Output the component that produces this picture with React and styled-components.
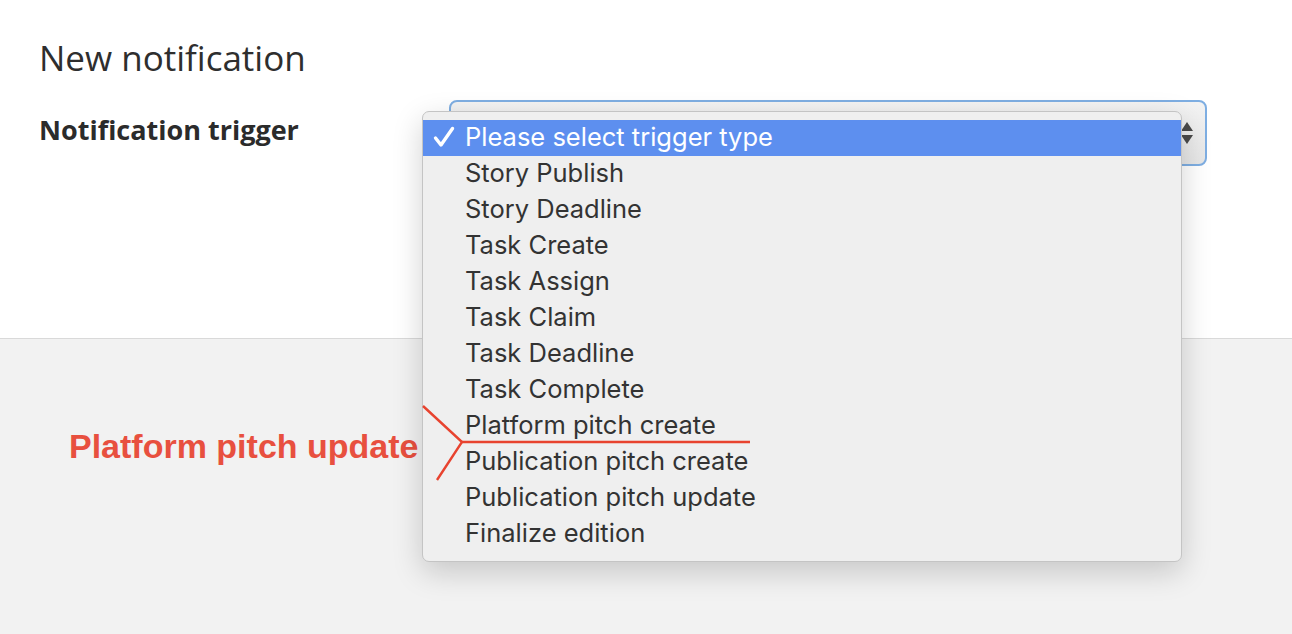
import React from "react";
import styled, { createGlobalStyle } from "styled-components";

const GlobalStyle = createGlobalStyle`
  html, body {
    margin: 0;
    padding: 0;
    background: #f2f2f2;
  }
  body {
    font-family: "Open Sans", Roboto, sans-serif;
    color: #2b2b2b;
  }
`;

const triggers = [
  "Please select trigger type",
  "Story Publish",
  "Story Deadline",
  "Task Create",
  "Task Assign",
  "Task Claim",
  "Task Deadline",
  "Task Complete",
  "Platform pitch create",
  "Publication pitch create",
  "Publication pitch update",
  "Finalize edition",
];

const CheckIcon = () => (
  <svg width="24" height="24" viewBox="0 0 24 24">
    <path
      d="M3.5 13 L9 20 L20.5 3.5"
      fill="none"
      stroke="#fff"
      strokeWidth="3.4"
      strokeLinecap="round"
      strokeLinejoin="round"
    />
  </svg>
);

const Arrows = () => (
  <svg width="14" height="24" viewBox="0 0 14 24">
    <path d="M7 1 L13 10 L1 10 Z" fill="#4a4a4a" />
    <path d="M7 23 L13 14 L1 14 Z" fill="#4a4a4a" />
  </svg>
);

const App = () => {
  return (
    <>
      <GlobalStyle />
      <Page>
        <FormPanel>
          <Title>New notification</Title>
          <FieldRow>
            <Label>Notification trigger</Label>
            <SelectWrap>
              <SelectBox>
                <Arrows />
              </SelectBox>
              <Menu>
                {triggers.map((t, i) => (
                  <Option key={t} $selected={i === 0}>
                    <Check>{i === 0 && <CheckIcon />}</Check>
                    {t}
                  </Option>
                ))}
              </Menu>
            </SelectWrap>
          </FieldRow>
        </FormPanel>
        <Footer>
          <Note>Platform pitch update</Note>
        </Footer>
        <Pointer width="340" height="90" viewBox="0 0 340 90">
          <path d="M1 1 L40 37 L15 75" fill="none" stroke="#e8432f" strokeWidth="2.4" />
          <path d="M40 37 L328 37" fill="none" stroke="#e8432f" strokeWidth="2.4" />
        </Pointer>
      </Page>
    </>
  );
};

export default App;

const Page = styled.div`
  position: relative;
  min-height: 634px;
  display: flex;
  flex-direction: column;
`;

const FormPanel = styled.div`
  background: #fff;
  height: 339px;
  box-sizing: border-box;
  padding: 36px 39px 0;
  border-bottom: 1px solid #d9d9d9;
`;

const Title = styled.h1`
  margin: 0 0 22px;
  font-family: "Open Sans", sans-serif;
  font-weight: 400;
  font-size: 35px;
  line-height: 44px;
  color: #2e2e2e;
`;

const FieldRow = styled.div`
  display: flex;
  align-items: flex-start;
`;

const Label = styled.label`
  width: 410px;
  flex: none;
  font-family: "Open Sans", sans-serif;
  font-weight: 700;
  font-size: 27px;
  line-height: 34px;
  padding-top: 11px;
  color: #2b2b2b;
`;

const SelectWrap = styled.div`
  position: relative;
  width: 758px;
  margin-top: -2px;
`;

const SelectBox = styled.div`
  height: 66px;
  box-sizing: border-box;
  border: 2px solid #7eaee2;
  border-radius: 8px;
  background: linear-gradient(#f3f3f3, #e6e6e6);
  display: flex;
  align-items: center;
  justify-content: flex-end;
  padding-right: 11px;
`;

const Menu = styled.ul`
  position: absolute;
  top: 11px;
  left: -27px;
  width: 760px;
  margin: 0;
  padding: 8px 0 9px;
  list-style: none;
  box-sizing: border-box;
  background: #efefef;
  border: 1px solid #c4c4c4;
  border-radius: 7px;
  box-shadow: 0 10px 30px rgba(0, 0, 0, 0.18);
  z-index: 2;
`;

const Option = styled.li`
  height: 36px;
  display: flex;
  align-items: center;
  padding-bottom: 3px;
  box-sizing: border-box;
  font-family: "Inter", "Noto Sans", sans-serif;
  font-size: 25.5px;
  color: ${(p) => (p.$selected ? "#fff" : "#333")};
  background: ${(p) => (p.$selected ? "#5d8fef" : "transparent")};
`;

const Check = styled.span`
  width: 42px;
  padding-left: 9px;
  box-sizing: border-box;
  display: flex;
  align-items: center;
`;

const Footer = styled.div`
  flex: 1;
  background: #f2f2f2;
  padding: 88px 69px 0;
`;

const Note = styled.div`
  font-family: "Liberation Sans", Arial, sans-serif;
  font-weight: 700;
  font-size: 34px;
  color: #e8503f;
`;

const Pointer = styled.svg`
  position: absolute;
  left: 422px;
  top: 405px;
  z-index: 3;
`;
